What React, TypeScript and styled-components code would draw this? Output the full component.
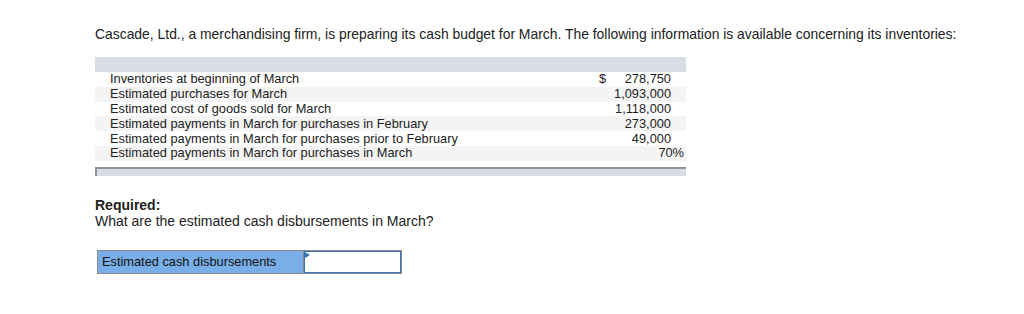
import React from "react"
import { styled, createGlobalStyle } from "styled-components"

const GlobalStyle = createGlobalStyle`
  body {
    margin: 0;
    background: #fff;
    font-family: "Liberation Sans", Arial, sans-serif;
    color: #222;
  }
`

const Page = styled.div`
  padding: 26px 0 0 95px;
  width: 1024px;
  height: 314px;
  box-sizing: border-box;
`

const Intro = styled.p`
  margin: 0;
  font-size: 13.9px;
  line-height: 17px;
`

const Table = styled.div`
  margin-top: 14px;
  width: 591px;
`

const HeaderBar = styled.div`
  height: 15px;
  background: #d7dce5;
`

const Row = styled.div<{ $shade: boolean }>`
  display: flex;
  align-items: center;
  height: 14.8px;
  padding: 0 2px 0 15px;
  background: ${(p) => (p.$shade ? "#f4f4f4" : "#fff")};
  font-size: 12.8px;
  line-height: 14px;
`

const Label = styled.div`
  flex: 1;
`

const Dollar = styled.span`
  width: 20px;
`

const Amount = styled.div<{ $hang: boolean }>`
  display: flex;
  justify-content: space-between;
  width: ${(p) => (p.$hang ? "85px" : "72px")};
  padding-right: ${(p) => (p.$hang ? "0" : "13px")};
`

const Value = styled.span`
  margin-left: auto;
`

const FooterBar = styled.div`
  margin-top: 6px;
  height: 7px;
  background: #d7dce5;
  border-top: 2px solid #8e9299;
  border-left: 2px solid #8e9299;
`

const Required = styled.div`
  margin-top: 21px;
  font-size: 14px;
  line-height: 16px;
`

const Bold = styled.div`
  font-weight: bold;
`

const AnswerRow = styled.div`
  display: flex;
  margin: 21px 0 0 2px;
  height: 24px;
  width: 305px;
  border: 1px solid #8a8a8a;
  box-sizing: border-box;
`

const AnswerLabel = styled.div`
  width: 206px;
  background: #79aee8;
  border-right: 1px solid #8a8a8a;
  font-size: 12.8px;
  line-height: 22px;
  padding-left: 4px;
  box-sizing: border-box;
  color: #111;
`

const AnswerInput = styled.div`
  position: relative;
  flex: 1;
  background: #fff;
  border: 1px solid #3d74b8;
`

const Flag = styled.div`
  position: absolute;
  top: 0;
  left: 0;
  width: 0;
  height: 0;
  border-top: 3px solid transparent;
  border-bottom: 3px solid transparent;
  border-left: 5px solid #3d74b8;
`

const rows: [string, string, boolean?][] = [
  ["Inventories at beginning of March", "278,750", true],
  ["Estimated purchases for March", "1,093,000"],
  ["Estimated cost of goods sold for March", "1,118,000"],
  ["Estimated payments in March for purchases in February", "273,000"],
  ["Estimated payments in March for purchases prior to February", "49,000"],
  ["Estimated payments in March for purchases in March", "70%"],
]

export default function App() {
  return (
    <Page>
      <GlobalStyle />
      <Intro>
        Cascade, Ltd., a merchandising firm, is preparing its cash budget for March. The following
        information is available concerning its inventories:
      </Intro>
      <Table>
        <HeaderBar />
        {rows.map(([label, value, dollar], i) => (
          <Row key={label} $shade={i % 2 === 1}>
            <Label>{label}</Label>
            <Amount $hang={value.endsWith("%")}>
              {dollar && <Dollar>$</Dollar>}
              <Value>{value}</Value>
            </Amount>
          </Row>
        ))}
        <FooterBar />
      </Table>
      <Required>
        <Bold>Required:</Bold>
        What are the estimated cash disbursements in March?
      </Required>
      <AnswerRow>
        <AnswerLabel>Estimated cash disbursements</AnswerLabel>
        <AnswerInput>
          <Flag />
        </AnswerInput>
      </AnswerRow>
    </Page>
  )
}
